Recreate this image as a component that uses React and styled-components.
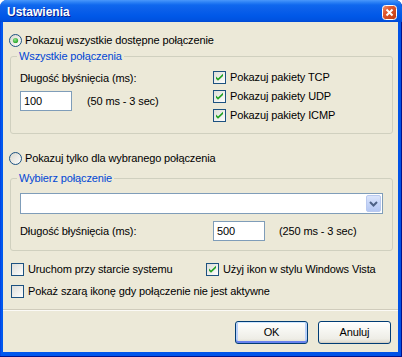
import React from "react";
import styled, { createGlobalStyle } from "styled-components";

const Global = createGlobalStyle`
  html, body { margin: 0; padding: 0; background: #fff; }
  body { font-family: "Liberation Sans", Arial, sans-serif; font-size: 11px; color: #000; letter-spacing: -0.12px; }
  * { box-sizing: border-box; }
`;

const Window = styled.div`
  width: 402px;
  height: 357px;
  display: flex;
  flex-direction: column;
  background: linear-gradient(90deg, #0831d9 0px, #0058ee 1px, #0052e6 100%);
  border-radius: 7px 7px 0 0;
  box-shadow: inset 0 -1px 0 #00138c, inset -1px 0 0 #00138c;
  padding: 0 4px 5px 3px;
`;

const TitleBar = styled.div`
  height: 22px;
  margin: 0 -4px 0 -3px;
  padding: 2px 5px 0 7px;
  display: flex;
  align-items: center;
  justify-content: space-between;
  border-radius: 7px 7px 0 0;
  background: linear-gradient(
    180deg,
    #4a98fb 0px,
    #2f84f6 2px,
    #0f68ee 5px,
    #0a5fea 10px,
    #0058e8 16px,
    #0052e0 20px,
    #0049d4 22px
  );
`;

const Title = styled.span`
  font-family: "Liberation Sans", Arial, sans-serif;
  font-weight: bold;
  font-size: 12px;
  color: #fff;
  text-shadow: 1px 1px 0 #0a1e8c;
  letter-spacing: 0;
`;

const Client = styled.div`
  flex: 1;
  background: #ece9d8;
  display: flex;
  flex-direction: column;
`;

const Body = styled.div`
  padding: 0 5px 0 6px;
  display: flex;
  flex-direction: column;
`;

const Row = styled.div`
  display: flex;
  align-items: center;
  height: ${(p) => p.$h || 13}px;
  margin-top: ${(p) => p.$mt || 0}px;
  margin-left: ${(p) => p.$ml || 0}px;
  gap: ${(p) => p.$gap || 0}px;
`;

const Label = styled.span`
  line-height: 13px;
  white-space: nowrap;
  margin-left: ${(p) => p.$ml || 0}px;
`;

const Group = styled.div`
  position: relative;
  margin-top: ${(p) => p.$mt}px;
  margin-left: 1px;
  border: 1px solid #d0d0bf;
  border-radius: 3px;
  padding: 14px 9px ${(p) => p.$pb}px 9px;
`;

const Legend = styled.span`
  position: absolute;
  top: -7px;
  left: 6px;
  padding: 0 2px;
  background: #ece9d8;
  color: #0046d5;
  line-height: 13px;
`;

const Columns = styled.div`
  display: flex;
`;

const LeftCol = styled.div`
  width: ${(p) => p.$w || 193}px;
  display: flex;
  flex-direction: column;
`;

const RightCol = styled.div`
  display: flex;
  flex-direction: column;
  gap: 6px;
`;

const Field = styled.div`
  width: 52px;
  height: 20px;
  border: 1px solid #7f9db9;
  background: #fff;
  padding: 0 3px;
  display: flex;
  align-items: center;
  line-height: 13px;
  flex-shrink: 0;
`;

const Combo = styled.div`
  height: 21px;
  border: 1px solid #7f9db9;
  background: #fff;
  display: flex;
  justify-content: flex-end;
  padding: 1px;
`;

const ComboButton = styled.div`
  width: 15px;
  height: 17px;
  border: 1px solid #b9c9ef;
  border-radius: 2px;
  background: linear-gradient(180deg, #dbe5fb 0%, #c6d5f8 50%, #b5c8f3 100%);
  display: flex;
  align-items: center;
  justify-content: center;
`;

const Separator = styled.div`
  margin-top: 11px;
  height: 2px;
  border-top: 1px solid #d0ccbc;
  border-bottom: 1px solid #fbfaf6;
`;

const ButtonBar = styled.div`
  display: flex;
  justify-content: flex-end;
  gap: 10px;
  margin-top: 10px;
  padding-right: 7px;
`;

const Button = styled.div`
  width: 73px;
  height: 23px;
  border: 1px solid #003c74;
  border-radius: 3px;
  background: linear-gradient(180deg, #ffffff 0%, #f6f6f2 40%, #eeede6 80%, #dcd8cb 100%);
  display: flex;
  align-items: center;
  justify-content: center;
  line-height: 13px;
  box-shadow: ${(p) =>
    p.$default
      ? "inset 0 1px 0 #cee7ff, inset 0 -2px 0 #6982ee, inset 2px 0 0 #b9d1fa, inset -2px 0 0 #b9d1fa"
      : "inset 0 -1px 0 #d6d0c5"};
`;

const CloseButton = () => (
  <svg width="15" height="15" viewBox="0 0 15 15">
    <defs>
      <linearGradient id="cg" x1="0" y1="0" x2="1" y2="1">
        <stop offset="0" stopColor="#f09a7a" />
        <stop offset="0.35" stopColor="#e0582f" />
        <stop offset="1" stopColor="#c03a10" />
      </linearGradient>
    </defs>
    <rect x="0.5" y="0.5" width="14" height="14" rx="3" fill="url(#cg)" stroke="#fff" />
    <path d="M4.5 4.5 L10.5 10.5 M10.5 4.5 L4.5 10.5" stroke="#fff" strokeWidth="2" />
  </svg>
);

const Radio = ({ checked }) => (
  <svg width="13" height="13" viewBox="0 0 13 13" style={{ flexShrink: 0 }}>
    <defs>
      <linearGradient id="rg" x1="0" y1="0" x2="1" y2="1">
        <stop offset="0" stopColor="#d8d6cb" />
        <stop offset="1" stopColor="#ffffff" />
      </linearGradient>
      <radialGradient id="rd" cx="0.4" cy="0.35" r="0.7">
        <stop offset="0" stopColor="#8ce28a" />
        <stop offset="1" stopColor="#21a121" />
      </radialGradient>
    </defs>
    <circle cx="6.5" cy="6.5" r="6" fill="url(#rg)" stroke="#1c5180" />
    {checked && <circle cx="6.5" cy="6.5" r="2.6" fill="url(#rd)" />}
  </svg>
);

const Check = ({ checked }) => (
  <svg width="13" height="13" viewBox="0 0 13 13" style={{ flexShrink: 0 }}>
    <defs>
      <linearGradient id="kg" x1="0" y1="0" x2="1" y2="1">
        <stop offset="0" stopColor="#dcdcd7" />
        <stop offset="1" stopColor="#ffffff" />
      </linearGradient>
    </defs>
    <rect x="0.5" y="0.5" width="12" height="12" fill="url(#kg)" stroke="#1c5180" />
    {checked && (
      <path d="M3 5.5 L5 7.5 L10 2.8 L10 5 L5 9.8 L3 7.8 Z" fill="#21a121" />
    )}
  </svg>
);

const Chevron = () => (
  <svg width="9" height="6" viewBox="0 0 9 6">
    <path d="M1 1 L4.5 4.5 L8 1" fill="none" stroke="#4d6185" strokeWidth="2" />
  </svg>
);

const CheckRow = ({ checked, children }) => (
  <Row $gap={4}>
    <Check checked={checked} />
    <Label>{children}</Label>
  </Row>
);

export default function App() {
  return (
    <>
      <Global />
      <Window>
        <TitleBar>
          <Title>Ustawienia</Title>
          <CloseButton />
        </TitleBar>
        <Client>
          <Body>
            <Row $mt={12} $gap={3}>
              <Radio checked />
              <Label>Pokazuj wszystkie dostępne połączenie</Label>
            </Row>

            <Group $mt={9} $pb={11}>
              <Legend>Wszystkie połączenia</Legend>
              <Columns>
                <LeftCol>
                  <Row $mt={1}>
                    <Label>Długość błyśnięcia (ms):</Label>
                  </Row>
                  <Row $mt={6} $h={20}>
                    <Field>100</Field>
                    <Label $ml={15}>(50 ms - 3 sec)</Label>
                  </Row>
                </LeftCol>
                <RightCol>
                  <CheckRow checked>Pokazuj pakiety TCP</CheckRow>
                  <CheckRow checked>Pokazuj pakiety UDP</CheckRow>
                  <CheckRow checked>Pokazuj pakiety ICMP</CheckRow>
                </RightCol>
              </Columns>
            </Group>

            <Row $mt={18} $gap={3}>
              <Radio />
              <Label>Pokazuj tylko dla wybranego połączenia</Label>
            </Row>

            <Group $mt={13} $pb={9}>
              <Legend>Wybierz połączenie</Legend>
              <Combo>
                <ComboButton>
                  <Chevron />
                </ComboButton>
              </Combo>
              <Row $mt={7} $h={20}>
                <LeftCol>
                  <Label>Długość błyśnięcia (ms):</Label>
                </LeftCol>
                <Field>500</Field>
                <Label $ml={14}>(250 ms - 3 sec)</Label>
              </Row>
            </Group>

            <Row $mt={12} $ml={2}>
              <LeftCol $w={195}>
                <CheckRow>Uruchom przy starcie systemu</CheckRow>
              </LeftCol>
              <CheckRow checked>Użyj ikon w stylu Windows Vista</CheckRow>
            </Row>
            <Row $mt={9} $ml={2}>
              <CheckRow>Pokaż szarą ikonę gdy połączenie nie jest aktywne</CheckRow>
            </Row>
          </Body>
          <Separator />
          <ButtonBar>
            <Button $default>OK</Button>
            <Button>Anuluj</Button>
          </ButtonBar>
        </Client>
      </Window>
    </>
  );
}
